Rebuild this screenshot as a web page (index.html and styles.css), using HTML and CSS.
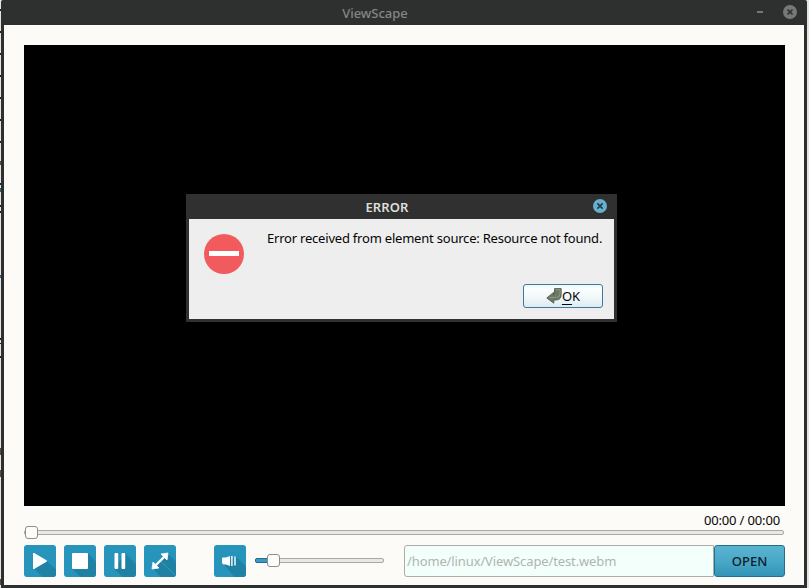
FILE: index.html
```html
<!DOCTYPE html>
<html lang="en">
<head>
<meta charset="utf-8">
<title>ViewScape</title>
<link rel="stylesheet" href="styles.css">
</head>
<body>
<svg class="backdrop" width="2" height="588" shape-rendering="crispEdges" aria-hidden="true">
  <path fill="#222" d="M0 9h2v2H0zM0 31h2v2H0zM0 53h2v2H0zM0 75h2v2H0zM0 97h2v2H0zM0 119h2v2H0zM0 141h2v2H0zM0 183h2v2H0zM0 205h2v2H0zM0 211h2v2H0zM0 338h2v2H0zM0 343h2v1H0zM0 356h2v2H0z"/>
  <path fill="#5b4a40" d="M0 161h2v4H0zM0 448h2v7H0zM0 470h2v7H0zM0 579h2v6H0z"/>
  <path fill="#35657d" d="M0 188h2v4H0zM0 275h2v3H0z"/>
</svg>
<main class="window">
  <header class="titlebar">
    <h1 class="title">ViewScape</h1>
    <div class="window-actions">
      <span class="minimize"></span>
      <svg class="close" viewBox="0 0 14 14"><circle cx="7" cy="7" r="7" fill="#777"/><path d="M4.500 4.500l5 5m0-5l-5 5" stroke="#2f2f2f" stroke-width="1.700"/></svg>
    </div>
  </header>
  <div class="content">
    <section class="video">
      <div class="dialog" role="alertdialog">
        <div class="dialog-title">
          <h2>ERROR</h2>
          <svg class="close" viewBox="0 0 14 14"><circle cx="7" cy="7" r="7" fill="#66afce"/><path d="M4.400 4.400l5.200 5.200m0-5.200l-5.200 5.200" stroke="#263c48" stroke-width="1.600"/></svg>
        </div>
        <div class="dialog-body">
          <svg class="stop" viewBox="0 0 40 40"><circle cx="20" cy="20" r="20" fill="#f15b5d"/><path fill="#fff" d="M5 17h30v5H5z"/></svg>
          <p class="message"><span>Error received from element source: Resource not found.</span></p>
          <button class="ok">
            <svg width="16" height="16" viewBox="0 0 16 16"><path d="M8.500.6h6.700v6.200q0 5-5 5.200H7.800v3.200L.8 10l6.700-5.600v2.800q1.500 0 1-2.200z" fill="#6d7b66" stroke="#465440" stroke-width=".8"/><path d="M9.500 1.600h4.500v4.500q0 3-3.500 3.300L3 9.600" fill="none" stroke="#8b9883"/></svg><span><u>O</u>K</span>
          </button>
        </div>
      </div>
    </section>
    <div class="time"><span>00:00 / 00:00</span></div>
    <div class="seek"><div class="track"></div><div class="thumb"></div></div>
    <div class="controls">
      <button class="icon"><svg viewBox="0 0 32 32"><path d="M10 23.500L22.500 16 32 24.500V32H18.500z" fill="#1f82a5"/><path d="M9 8.800q0-1.300 1.200-.7l12.300 7.200q1 .7 0 1.400L10.200 23.900q-1.200.6-1.200-.7z" fill="#fff"/></svg></button>
      <button class="icon"><svg viewBox="0 0 32 32"><path d="M8 23.500L23.500 8 32 16.500V32H16.500z" fill="#1f82a5"/><rect x="8" y="8" width="16" height="16" rx="1" fill="#fff"/></svg></button>
      <button class="icon"><svg viewBox="0 0 32 32"><path d="M10 23.500L21.500 8.500 32 19V32H18.500z" fill="#1f82a5"/><rect x="10.500" y="8" width="3.700" height="16" rx="1" fill="#fff"/><rect x="17.500" y="8" width="3.700" height="16" rx="1" fill="#fff"/></svg></button>
      <button class="icon"><svg viewBox="0 0 32 32"><path d="M8.500 23.500L24 8.500l8 8V32H17z" fill="#1f82a5"/><path d="M17 16.500L31 30" stroke="#47a2bf" stroke-width=".7"/><path d="M12 20l8-8" stroke="#fff" stroke-width="2.400"/><path fill="#fff" stroke="#fff" stroke-width=".8" stroke-linejoin="round" d="M24 8l-1 7-6-6zM8 24l1-7 6 6z"/></svg></button>
      <button class="icon speaker"><svg viewBox="0 0 32 32"><path d="M9.500 19L22 11.500l10 10V32H20.500z" fill="#1f82a5"/><path fill="#fff" d="M8 13.500q0-1 1-1h3l4-1.600v10.200l-4-1.600H9.500L8 18z"/><path d="M17.900 11v10M21 11.500v9" stroke="#fff" stroke-width="1.400"/></svg></button>
      <div class="volume"><div class="track"></div><div class="fill"></div><div class="thumb"></div></div>
      <div class="path"><span>/home/linux/ViewScape/test.webm</span></div>
      <button class="open"><span>OPEN</span></button>
    </div>
  </div>
</main>
</body>
</html>
```
FILE: styles.css
```css
* { box-sizing: border-box; }
body {
  margin: 0;
  width: 809px;
  height: 588px;
  overflow: hidden;
  background: #e3e4e4;
  font: 13px/18px "Noto Sans", sans-serif;
  color: #050505;
}
h1, h2, p { margin: 0; }
button { padding: 0; border: 0; font: inherit; color: inherit; }
svg { display: block; }
.backdrop { position: absolute; left: 0; top: 0; }
.window {
  position: relative;
  width: 806px;
  height: 588px;
  margin-left: 1px;
  padding: 0 3px 3px;
  display: flex;
  flex-direction: column;
  background: #2e302f;
  border-radius: 2px 2px 0 0;
}
.titlebar {
  height: 25px;
  flex: none;
  display: grid;
  grid-template-columns: 1fr auto 1fr;
  align-items: center;
  color: #858585;
}
.title {
  grid-column: 2;
  margin-left: -58px;
  font-size: 13px;
  font-weight: 500;
  white-space: nowrap;
}
.window-actions {
  display: flex;
  align-items: center;
  justify-content: flex-end;
  gap: 20px;
  padding: 0 7px 1px 0;
}
.minimize { width: 6px; height: 2px; background: #777; }
.close { width: 14px; height: 14px; }
.content {
  flex: 1;
  background: #fcfbf8;
  padding: 20px 19px 0 20px;
}
.video {
  height: 461px;
  background: #000;
  display: flex;
  justify-content: center;
  padding-top: 149px;
}
.dialog {
  width: 431px;
  height: 128px;
  margin-left: -6px;
  padding: 0 3px 3px;
  background: #2f302f;
}
.dialog-title {
  height: 25px;
  display: grid;
  grid-template-columns: 1fr auto 1fr;
  align-items: center;
}
.dialog-title h2 {
  grid-column: 2;
  margin-left: -29px;
  font-size: 13px;
  font-weight: 600;
  letter-spacing: .1px;
  color: #dededb;
}
.dialog-title .close { justify-self: end; margin: 0 7px 2px 0; }
.dialog-body {
  height: 100px;
  background: #eeeeee;
  display: grid;
  grid-template-columns: 63px minmax(0, 1fr);
  grid-template-rows: 50px 24px;
  padding: 15px 11px 11px 15px;
}
.stop { width: 40px; height: 40px; }
.message { white-space: nowrap; margin-top: -5px; }
.message span { letter-spacing: -.21px; }
.ok {
  grid-column: 2;
  justify-self: end;
  width: 80px;
  height: 24px;
  display: flex;
  align-items: center;
  justify-content: center;
  border: 1px solid #3f789b;
  border-radius: 3px;
  background: linear-gradient(#edfafa, #fbfefe 20%, #f1f7f9 60%, #dcebf2);
}
.ok u { text-underline-offset: 3px; }
.time {
  height: 20px;
  padding: 5px 5px 0 0;
  text-align: right;
  letter-spacing: -.15px;
}
.seek { height: 13px; position: relative; padding: 4px 1px 0 0; }
.seek .track { height: 5px; }
.track {
  border: 1px solid #a9aaa8;
  border-radius: 2px;
  background: #e8e8e5;
}
.thumb {
  position: absolute;
  left: 1px;
  top: 0;
  width: 13px;
  height: 13px;
  border: 1px solid #8d8e8d;
  border-radius: 3px;
  background: #fdfdfc;
}
.controls { display: flex; margin-top: 6px; height: 32px; }
.icon {
  width: 32px;
  height: 32px;
  flex: none;
  margin-right: 8px;
  border-radius: 3px;
  overflow: hidden;
  background: #2794bb;
}
.icon.speaker { margin: 0 9px 0 30px; }
.volume { position: relative; width: 129px; margin-right: 20px; padding-top: 13px; }
.volume .track, .fill { height: 5px; }
.fill {
  width: 16px;
  margin-top: -5px;
  border: 1px solid #276b90;
  border-radius: 2px 0 0 2px;
  background: #3f97c5;
}
.volume .thumb { left: 12px; top: 9px; }
.path {
  width: 310px;
  border: 1px solid #a9adab;
  border-radius: 3px 0 0 3px;
  background: #f3fffa;
  color: #aeb6b1;
  padding: 6px 2px;
  letter-spacing: -.12px;
  white-space: nowrap;
}
.open {
  flex: 1;
  border: 1px solid #23708c;
  border-radius: 3px;
  background: linear-gradient(#5ab4d1, #49a8c7 50%, #3294b8);
  color: #102029;
  font-weight: 500;
}
```
